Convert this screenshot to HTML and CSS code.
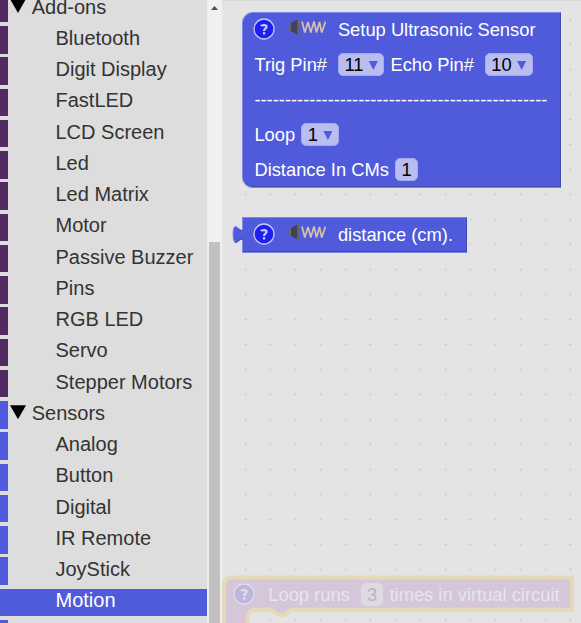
FILE: index.html
```html
<!DOCTYPE html>
<html lang="en">
<head>
<meta charset="utf-8">
<title>Blocks</title>
<link rel="stylesheet" href="styles.css">
</head>
<body>
<svg class="defs" width="0" height="0" aria-hidden="true">
  <symbol id="help" viewBox="0 0 22 22">
    <circle class="disc" cx="11" cy="11" r="10" stroke-width="1.3"/>
    <path class="mark" d="M8 8.2C8.5 6.9 13.6 6.3 13.6 8.8C13.6 10.6 11 10.8 11 13" fill="none" stroke-width="2.2"/>
    <path class="mark" d="M11.1 14.2V16.5" stroke-width="2.3"/>
  </symbol>
  <symbol id="sonar" viewBox="0 0 38 18">
    <path d="M0.5 5.5L3 5V13L0.5 12.5Z" fill="#65656e"/>
    <path d="M3 5L9.5 1.4V16.6L3 13Z" fill="#414356"/>
    <path d="M9.5 1L12 0.8V17.2L9.5 17Z" fill="#65656e"/>
    <path d="M14 3.5L16.8 14.5L20 4L22.8 14.5L26 3.5L28.5 14.5L31.500 4L33.700 14.500L37.500 3.500" fill="none" stroke="#d8c0a8" stroke-width="1.7" stroke-linejoin="bevel"/>
  </symbol>
</svg>
<div class="app">
  <nav class="toolbox">
    <div class="row addon group"><i class="caret"></i>Add-ons</div>
    <div class="row addon">Bluetooth</div>
    <div class="row addon">Digit Display</div>
    <div class="row addon">FastLED</div>
    <div class="row addon">LCD Screen</div>
    <div class="row addon">Led</div>
    <div class="row addon">Led Matrix</div>
    <div class="row addon">Motor</div>
    <div class="row addon">Passive Buzzer</div>
    <div class="row addon">Pins</div>
    <div class="row addon">RGB LED</div>
    <div class="row addon">Servo</div>
    <div class="row addon">Stepper Motors</div>
    <div class="row sensor group"><i class="caret"></i>Sensors</div>
    <div class="row sensor">Analog</div>
    <div class="row sensor">Button</div>
    <div class="row sensor">Digital</div>
    <div class="row sensor">IR Remote</div>
    <div class="row sensor">JoyStick</div>
    <div class="row sensor selected">Motion</div>
    <div class="row sensor"></div>
  </nav>
  <div class="scrollbar"><i class="up"></i><i class="thumb"></i></div>
  <main class="canvas">
    <section class="block setup">
      <div class="line"><svg class="help"><use href="#help"/></svg><svg class="sonar"><use href="#sonar"/></svg><span>Setup Ultrasonic Sensor</span></div>
      <div class="line"><span class="spaced">Trig Pin#</span><span class="field">11<i class="drop"></i></span><span class="spaced">Echo Pin#</span><span class="field">10<i class="drop"></i></span></div>
      <div class="line"><span class="rule">------------------------------------------------</span></div>
      <div class="line"><span>Loop</span><span class="field">1<i class="drop"></i></span></div>
      <div class="line"><span>Distance In CMs</span><span class="field">1</span></div>
    </section>
    <section class="block distance">
      <svg class="tab" viewBox="0 0 12 22"><path d="M12 6H9.5L4 2.5Q1 1.5 1 10.5Q1 20 4 18.5L9.5 15H12Z" fill="#4f5bda"/><path d="M3 18Q1 17 1 10.5Q1 1.5 4 2.5L7 4.5" fill="none" stroke="#8089e2"/><path d="M3 18.5Q5 19 7 16.5Q9 14.5 11 15.5" fill="none" stroke="#3f49ae"/></svg>
      <div class="line"><svg class="help"><use href="#help"/></svg><svg class="sonar"><use href="#sonar"/></svg><span>distance (cm).</span></div>
    </section>
    <section class="block loop">
      <svg class="outline" viewBox="0 0 359 60"><path d="M2 60V10.5Q2 2.5 10.5 2.5H350V34.7H70L64 38.5Q59.5 42 55 38.5L49 34.7H34Q25.5 35 25.5 44V60" fill="#d5c6d9"/><path d="M25.500 60V44Q25.500 35 34 34.700H49L55 38.500Q59.500 42 64 38.500L70 34.700H350V2.500H10.500Q2 2.500 2 10.500V60" fill="none" stroke="#e5d9b7" stroke-width="4"/></svg>
      <div class="line"><svg class="help"><use href="#help"/></svg><span class="runs">Loop runs</span><span class="field">3</span><span>times in virtual circuit</span></div>
    </section>
  </main>
</div>
</body>
</html>
```
FILE: styles.css
```css
* { box-sizing: border-box; }
body { margin: 0; overflow: hidden; font-family: "Liberation Sans", Arial, sans-serif; }
.defs { position: absolute; }
.app { display: flex; width: 581px; height: 623px; overflow: hidden; background: #e4e4e4; }

.toolbox { flex: none; width: 207px; background: #ddd; }
.row { height: 27.5px; margin-bottom: 3.75px; border-left: 8px solid; padding: .8px 0 0 47.5px; color: #333; font-size: 20px; line-height: 23px; white-space: nowrap; }
.row:first-child { margin-top: -5.1px; }
.addon { border-color: #522b62; }
.sensor { border-color: #4f5bda; }
.group { display: flex; padding-left: 2px; }
.caret { width: 16px; height: 14px; margin: 3.2px 5.7px 0 0; background: #000; clip-path: polygon(0 0, 100% 0, 50% 100%); }
.selected { background: #4f5bda; color: #fff; }

.scrollbar { flex: none; width: 15px; padding: 6px 2px 0; background: #f0f0f0; }
.up { display: block; width: 7px; height: 4px; margin-left: 2px; background: #505050; clip-path: polygon(50% 0, 100% 100%, 0 100%); }
.thumb { display: block; height: 400px; margin-top: 232px; background: #c1c1c1; }

.canvas { position: relative; flex: 1; overflow: hidden; border-top: 1px solid #d8d8d8; background: radial-gradient(circle at 12.5px 12.5px, #cacaca .8px, transparent 1.2px) 11px 6px / 25px 25px; }
.block { position: absolute; color: #fff; font-size: 18.33px; white-space: nowrap; }
.setup, .distance { background: #4f5bda; border: 1px solid #8089e2; border-right-color: #3f49ae; box-shadow: inset 0 -1px #3f49ae; padding-left: 11.4px; }
.setup { left: 20px; top: 11px; width: 319px; height: 176px; border-radius: 11px 0 0 11px; }
.distance { left: 20px; top: 216px; width: 225px; height: 36px; }
.tab { position: absolute; left: -11px; top: 6px; width: 12px; height: 22px; }
.line { display: flex; align-items: center; gap: 6.25px; height: 35px; margin-top: -1px; margin-bottom: 1px; }
.setup .line + .line { margin-top: 0; margin-bottom: 0; }
.setup .line:first-child { margin-bottom: 0; }
.help { --disc: #1f1ff0; --ring: #c5c9f3; --mark: #c8ccf6; flex: none; width: 22px; height: 22px; margin: -1px 0 0 -1px; }
.disc { fill: var(--disc); stroke: var(--ring); }
.mark { stroke: var(--mark); }
.sonar { flex: none; width: 38px; height: 18px; margin: -5px 6px 0 6px; }
.spaced { padding-right: 4.7px; }
.field { display: flex; align-items: center; height: 23px; padding: 0 5.4px; border: 1px solid #a4aaed; border-radius: 5px; background: #b9bdf0; color: #000; }
.drop { width: 9px; height: 9px; margin: 2px 0 0 5.4px; background: #4f5bda; clip-path: polygon(0 0, 100% 0, 50% 100%); }

.loop { left: 0; top: 574px; width: 359px; height: 60px; color: #e8e5ea; }
.outline { position: absolute; left: 0; top: 0; width: 359px; height: 60px; }
.loop .line { position: relative; height: 37px; margin: 1px 0 0; padding-left: 12px; }
.loop .help { --disc: #bdb6df; --ring: #e1dce5; --mark: #e3dfe9; }
.runs { margin-left: 7px; padding-right: 5px; }
.loop .field { padding: 0 5px; background: #dfdae1; border-color: #dfdae1; color: #b6b3b7; }
```
